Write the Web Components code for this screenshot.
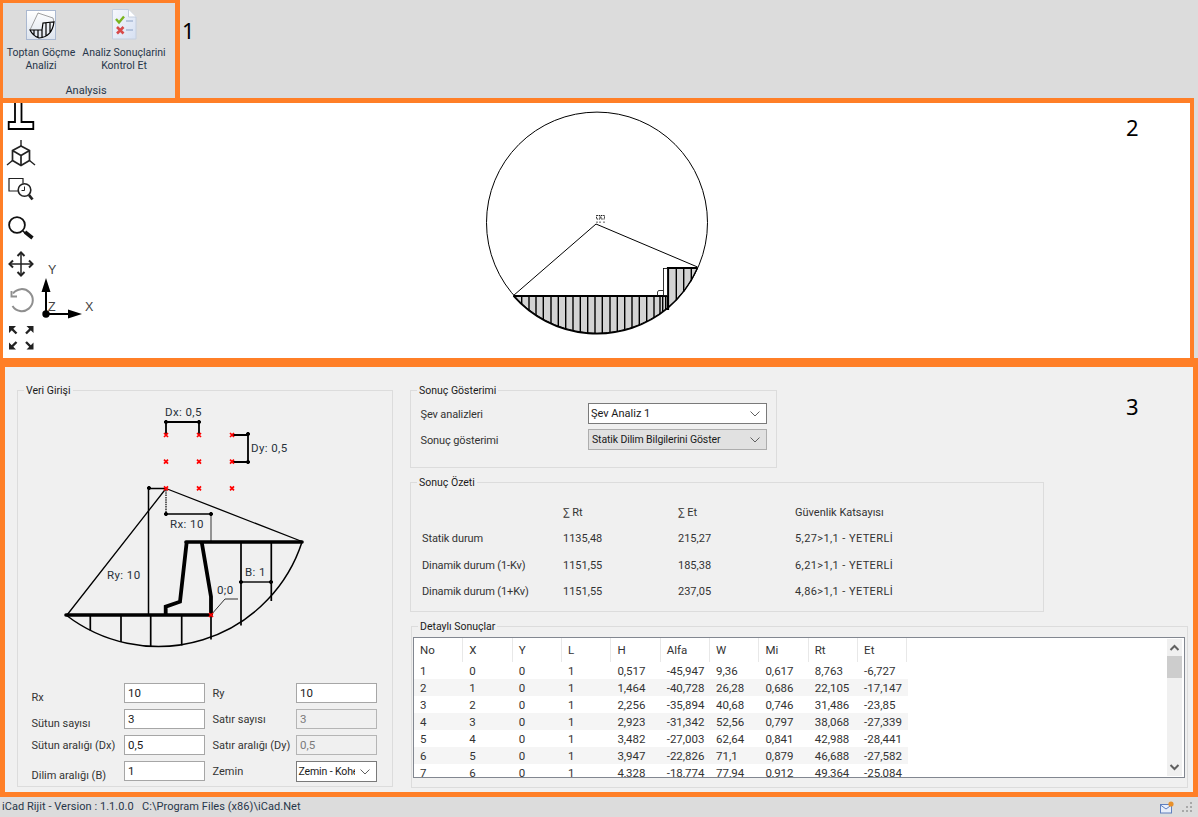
<!DOCTYPE html>
<html lang="tr">
<head>
<meta charset="utf-8">
<title>iCad Rijit</title>
<style>
html,body{margin:0;padding:0;background:#dcdcdc;}
body{width:1198px;height:817px;overflow:hidden;font:11px Roboto,"Noto Sans",sans-serif;color:#1a1a1a;}
</style>
</head>
<body>
<app-root></app-root>
<script>
const UI='Roboto,"Noto Sans",sans-serif';
const NUM='"Noto Sans","Open Sans",sans-serif';
const ORANGE='#ff7f27';
function def(name,html,init){
  customElements.define(name,class extends HTMLElement{
    constructor(){super();const r=this.attachShadow({mode:'open'});r.innerHTML=typeof html==='function'?html(this):html;if(init)init.call(this,r);}
  });
}
def('ribbon-button',`<style>
:host{display:flex;flex-direction:column;align-items:center;font:10.5px/13px ${UI};color:#27364a;text-align:center;white-space:pre;}
.i{height:36px;margin-top:7px;display:flex;align-items:flex-start;}
</style><div class="i"><slot name="icon"></slot></div><div class="t"><slot></slot></div>`);
def('ribbon-bar',`<style>
:host{display:flex;height:98px;background:#dcdcdc;flex:none;}
.g{box-sizing:border-box;width:180px;height:98px;border:solid ${ORANGE};border-width:3px 5px 0 3px;display:flex;flex-direction:column;}
.b{display:flex;flex:1;}
.l{font:11px/13px ${UI};color:#27364a;text-align:center;padding:0 0 1px 0;margin-left:-6px;}
.n{font:22px/26px ${NUM};color:#000;margin:17px 0 0 2px;}
::slotted([slot=a]){width:76px;}
::slotted([slot=b]){width:90px;}
</style><div class="g"><div class="b"><slot name="a"></slot><slot name="b"></slot></div><div class="l">Analysis</div></div><div class="n">1</div>`);
def('tool-strip',`<style>
:host{display:flex;flex-direction:column;width:38px;flex:none;}
svg{display:block;width:38px;}
</style>
<svg height="33" viewBox="3 103 38 33"><path d="M15 100V122H8.7V129H33.3V122H21.5V100" fill="#fff" stroke="#000" stroke-width="1.8"/></svg>
<svg height="36" viewBox="3 136 38 36" fill="none" stroke="#222" stroke-width="1.7">
<path d="M21 146L29.5 150.5V160.5L21 165.5L12.5 160.5V150.5Z M12.5 150.5L21 155.5L29.5 150.5 M21 155.5V165.5"/><path d="M21 140V146M12.5 160.5L7 165M29.5 160.5L35 165" stroke-width="1.4"/></svg>
<svg height="36" viewBox="3 172 38 36" fill="none" stroke="#222" stroke-width="1.2">
<path d="M18 191H9V178.5H23V183.5" /><circle cx="24.5" cy="190" r="6.3" stroke-width="1.6"/><path d="M24.5 186.5V190.5H21.5" stroke-width="1"/><path d="M29 195L32.5 199.5" stroke-width="2.8"/></svg>
<svg height="36" viewBox="3 208 38 36" fill="none" stroke="#111"><circle cx="17" cy="225" r="7.9" stroke-width="1.8"/><path d="M23 231L25 233" stroke-width="1.6"/><path d="M25 232L32.5 238" stroke-width="3.6"/></svg>
<svg height="37" viewBox="3 244 38 37" fill="none" stroke="#222" stroke-width="1.5"><path d="M21 253V275M10 264H32"/><path d="M17.5 256L21 252.5L24.5 256M17.5 272L21 275.5L24.5 272M13 260.5L9.5 264L13 267.5M29 260.5L32.5 264L29 267.5" stroke-width="2"/></svg>
<svg height="37" viewBox="3 281 38 37" fill="none" stroke="#8f8f8f" stroke-width="2"><path d="M13 293.5A11 11 0 1 1 12.5 306"/><path d="M11.5 291V296.5H17" stroke-width="1.9"/></svg>
<svg height="37" viewBox="3 318 38 37" fill="#222" stroke="#222"><path d="M9 326H16L9 333Z M33.5 326H26.5L33.5 333Z M9 349.5H16L9 342.5Z M33.5 349.5H26.5L33.5 342.5Z" stroke="none"/><path d="M11 328L16.5 333.5M31.5 328L26 333.5M11 347.5L16.5 342M31.5 347.5L26 342" stroke-width="2.4" fill="none"/></svg>`);
function stripes(){
  const xs=[155,177,198,220,243,265,287,309,331,353,375,397,420,442,464,486,508,530,552,570,578,587].map(v=>470+v/3);
  const cx=597,cy=222.6,r=111;
  let s='';
  xs.forEach(x=>{const y=cy+Math.sqrt(r*r-(x-cx)*(x-cx));s+=`M${x.toFixed(1)} 296V${y.toFixed(1)}`;});
  [668.3,676.3,683.7,691.3].forEach(x=>{const y=cy+Math.sqrt(r*r-(x-cx)*(x-cx));s+=`M${x} 268V${y.toFixed(1)}`;});
  return s;
}
def('view-port',()=>`<style>
:host{display:flex;box-sizing:border-box;width:1194px;height:260px;background:#fff;border:solid ${ORANGE};border-width:5px 4px 0 3px;flex:none;overflow:hidden;}
.a{flex:none;display:block;margin-top:155px;width:60px;height:70px;}
.c{flex:none;display:block;margin-left:379px;width:235px;height:255px;}
text{font:12.5px "Liberation Sans",sans-serif;fill:#444;}
.n{font:22px/26px ${NUM};color:#000;margin:11px 0 0 411px;}
</style>
<tool-strip></tool-strip>
<svg class="a" viewBox="41 258 60 70">
<path d="M46 314V285M46 314H72" stroke="#000" stroke-width="2"/>
<path d="M46 278L50.5 292H41.5ZM82 314L68 309.5V318.5Z" fill="#000"/><circle cx="46" cy="314" r="3.7" fill="#000"/>
<text x="48" y="274">Y</text><text x="48" y="311">Z</text><text x="85" y="311">X</text></svg>
<svg class="c" viewBox="480 103 235 255">
<path d="M513.5 296H668V268H697.5A111 111 0 0 1 513.5 296Z" fill="#d3d3d3"/>
<path d="${stripes()}" stroke="#000" stroke-width="1.4" fill="none"/>
<circle cx="597" cy="222.6" r="110.5" fill="none" stroke="#000" stroke-width="1"/>
<path d="M513.5 296A111 111 0 0 0 668 308" fill="none" stroke="#000" stroke-width="1.6"/>
<path d="M668 308A111 111 0 0 0 697.5 268" fill="none" stroke="#000" stroke-width="1.4"/>
<path d="M513.5 295.5L596 224L697.5 267" fill="none" stroke="#000" stroke-width="1"/>
<path d="M513.5 296H668M668 310V268H697.5" fill="none" stroke="#000" stroke-width="2.2"/>
<rect x="663.5" y="268.5" width="4" height="27" fill="#fff" stroke="#000" stroke-width=".8"/>
<path d="M657.5 295.5V292Q658 290 660 290.5H663" fill="#fff" stroke="#000" stroke-width=".8"/>
<g fill="none" stroke="#000" stroke-width=".9" stroke-dasharray="1.4 .8"><rect x="596.5" y="215.5" width="3.5" height="3.5"/><rect x="601" y="215.5" width="3.5" height="3.5"/><path d="M597 221.5V223.5M600 221.5V223.5M604 221.5V223.5"/></g>
</svg><div class="n">2</div>`);
def('group-box',`<style>
:host{display:block;box-sizing:border-box;position:relative;border:1px solid #dcdcdc;}
.l{position:absolute;top:-7px;left:6px;background:#f0f0f0;padding:0 2px;font:10.5px/14px ${UI};color:#1a1a1a;white-space:nowrap;}
</style><div class="l"></div><slot></slot>`,function(r){r.querySelector('.l').textContent=this.getAttribute('title')||'';this.removeAttribute('title');});
def('slope-diagram',()=>{
 const dots=[];[166,199,232].forEach(x=>[435,461.7,488.3].forEach(y=>dots.push([x,y])));dots.push([211,615]);
 const red=dots.map(([x,y])=>`<path d="M${x-2} ${y-2}L${x+2} ${y+2}M${x+2} ${y-2}L${x-2} ${y+2}" stroke="#f00" stroke-width="1.7"/>`).join('');
 const ends=[[166,422],[199,422],[248,434],[248,462],[149,488],[166,514],[211,514],[241,582],[271,582]].map(([x,y])=>`<circle cx="${x}" cy="${y}" r="1.6" fill="#000"/>`).join('');
 return `<style>:host{display:block}svg{display:block;width:374px;height:289px}text{font:11.5px ${UI};letter-spacing:.4px;fill:#27303a}</style>
<svg viewBox="18 391 374 289" fill="none" stroke="#000">
<path d="M66 615A151 151 0 0 0 302 542" stroke-width="1.5"/>
<path d="M90.3 615V630.5M121 615V642M150.7 615V646M181.7 615V645.5M211 615V639.5M241 542V625.5M271.3 542V601" stroke-width="1.7"/>
<path d="M166 488.5L67 615M166 488.5L302 541.5" stroke-width="1.3"/>
<path d="M166 488.5H148.5V615" stroke-width="1.5"/>
<path d="M166 490V514" stroke-width="1.2" stroke-dasharray="1.5 .8"/><path d="M166 514H211" stroke-width="1.4"/><path d="M211 514V542" stroke="#555" stroke-width="1.2"/>
<path d="M166 435V422H199V435" stroke-width="1.8"/><path d="M232 435H248V462H232" stroke-width="1.8"/>
<path d="M241 582H271" stroke-width="1.4"/>
<path d="M211 615L225 599H238" stroke="#333" stroke-width="1"/>
<path d="M66 615H211" stroke-width="3.6" stroke-linecap="round"/>
<path d="M186 542H302" stroke-width="3.6" stroke-linecap="round"/>
<path d="M186.7 542L180 601.7L165.7 606.7V615" stroke-width="3.8"/>
<path d="M201.7 542L211 596.7V615" stroke-width="3.8"/>
${ends}${red}
<g stroke="none"><text x="165" y="416">Dx: 0,5</text><text x="251" y="452">Dy: 0,5</text><text x="170" y="528">Rx: 10</text><text x="107" y="579">Ry: 10</text><text x="245" y="576">B: 1</text><text x="217" y="594">0;0</text></g>
</svg>`;});
def('text-field',`<style>
:host{display:block;box-sizing:border-box;height:20px;border:1px solid #a6a6a6;background:#fff;font:11.5px/18px ${UI};color:#1a1a1a;padding-left:3.5px;overflow:hidden;white-space:nowrap;}
:host([disabled]){background:#f0f0f0;border-color:#b5b5b5;color:#7a7a7a;}
</style><slot></slot>`);
def('combo-box',`<style>
:host{display:flex;box-sizing:border-box;height:21px;border:1px solid #7a7a7a;background:#fff;font:11px/19px ${UI};color:#1a1a1a;align-items:center;overflow:hidden;white-space:nowrap;}
:host([flat]){background:#e1e1e1;border-color:#adadad;}
:host([flat]),:host([tight]){font-size:10.5px;letter-spacing:-.12px;}
.t{flex:1;overflow:hidden;padding-left:2px;min-width:0;}
:host([flat]) .t{padding-left:3px;}
svg{flex:none;margin:0 6px 0 5px;display:block;}
</style><div class="t"><slot></slot></div><svg width="10" height="6" viewBox="0 0 10 6"><path d="M.5 .5L5 5L9.5 .5" fill="none" stroke="#606060"/></svg>`);
def('form-grid',`<style>
:host{display:grid;grid-template-columns:92px 81px 91px 81px;grid-auto-rows:26px;padding:3px 0 0 13.5px;font:11px/14px ${UI};color:#333;}
.l{padding-top:4px;white-space:nowrap;}
.d{padding-top:8px;}
.e2{padding-left:8px;padding-top:4px;white-space:nowrap;}
</style>
<div class="l d">Rx</div><text-field>10</text-field><div class="e2">Ry</div><text-field>10</text-field>
<div class="l d">Sütun sayısı</div><text-field>3</text-field><div class="e2">Satır sayısı</div><text-field disabled>3</text-field>
<div class="l">Sütun aralığı (Dx)</div><text-field>0,5</text-field><div class="e2">Satır aralığı (Dy)</div><text-field disabled>0,5</text-field>
<div class="l d">Dilim aralığı (B)</div><text-field>1</text-field><div class="e2">Zemin</div><combo-box tight>Zemin - Kohezyonlu</combo-box>`);
def('display-form',`<style>
:host{display:grid;grid-template-columns:167.5px 179px;grid-auto-rows:26px;padding:12px 0 0 9.5px;font:11px/21px ${UI};color:#333;}
div{padding-top:1px;letter-spacing:-.12px;}
</style><div>Şev analizleri</div><combo-box>Şev Analiz 1</combo-box><div>Sonuç gösterimi</div><combo-box flat>Statik Dilim Bilgilerini Göster</combo-box>`);
def('summary-grid',`<style>
:host{display:grid;grid-template-columns:141px 115px 117px auto;grid-auto-rows:26.4px;padding:17px 0 0 11px;font:11px/26px ${UI};color:#333;white-space:nowrap;}
.s{letter-spacing:.4px;}
.w{letter-spacing:-.12px;}
</style>
<div></div><div>∑ Rt</div><div>∑ Et</div><div>Güvenlik Katsayısı</div>
<div class="w">Statik durum</div><div>1135,48</div><div>215,27</div><div class="s">5,27&gt;1,1 - YETERLİ</div>
<div class="w">Dinamik durum (1-Kv)</div><div>1151,55</div><div>185,38</div><div class="s">6,21&gt;1,1 - YETERLİ</div>
<div class="w">Dinamik durum (1+Kv)</div><div>1151,55</div><div>237,05</div><div class="s">4,86&gt;1,1 - YETERLİ</div>`);
const HEAD=['No','X','Y','L','H','Alfa','W','Mi','Rt','Et'];
const ROWS=[
[1,0,0,1,'0,517','-45,947','9,36','0,617','8,763','-6,727'],
[2,1,0,1,'1,464','-40,728','26,28','0,686','22,105','-17,147'],
[3,2,0,1,'2,256','-35,894','40,68','0,746','31,486','-23,85'],
[4,3,0,1,'2,923','-31,342','52,56','0,797','38,068','-27,339'],
[5,4,0,1,'3,482','-27,003','62,64','0,841','42,988','-28,441'],
[6,5,0,1,'3,947','-22,826','71,1','0,879','46,688','-27,582'],
[7,6,0,1,'4,328','-18,774','77,94','0,912','49,364','-25,084']];
def('data-grid',()=>`<style>
:host{display:flex;box-sizing:border-box;margin:10px 0 0 1px;width:772px;height:141px;border:1px solid #828790;background:#fff;overflow:hidden;font:11.5px/17px ${UI};color:#333;}
.t{flex:none;width:752px;height:139px;overflow:hidden;}
.r{display:grid;grid-template-columns:repeat(10,49.35px);height:17px;width:494px;white-space:nowrap;}
.r div{padding:1px 0 0 6px;box-sizing:border-box;height:17px;}
.r:nth-child(even){background:#f5f5f5;}
.h{display:grid;grid-template-columns:repeat(10,49.35px);height:24px;width:494px;line-height:24px;}
.h div{padding-left:6px;box-sizing:border-box;border-right:1px solid #e8e8e8;}
.b{background:#fff;}
.s{flex:none;width:15px;margin:1px 2px 1px 1px;background:#f0f0f0;display:flex;flex-direction:column;align-items:center;}
.s svg{flex:none;display:block;}
.th{width:15px;height:22px;background:#cdcdcd;flex:none;}
.sp{flex:1;}
</style><div class="t"><div class="h">${HEAD.map(h=>`<div>${h}</div>`).join('')}</div><div class="b">${ROWS.map(r=>`<div class="r">${r.map(c=>`<div>${c}</div>`).join('')}</div>`).join('')}</div></div>
<div class="s"><svg width="15" height="17" viewBox="0 0 15 17"><path d="M3.5 11L7.5 7L11.5 11" fill="none" stroke="#606060" stroke-width="2"/></svg><div class="th"></div><div class="sp"></div><svg width="15" height="17" viewBox="0 0 15 17"><path d="M3.5 6L7.5 10L11.5 6" fill="none" stroke="#606060" stroke-width="2"/></svg></div>`);
def('main-panel',`<style>
:host{display:flex;box-sizing:border-box;height:439px;flex:none;width:1198px;background:#f0f0f0;border:solid ${ORANGE};border-width:9px 5px 5px 5px;padding:23px 0 0 12px;}
.left{width:376px;height:397px;flex:none;}
.right{display:flex;flex-direction:column;margin-left:17px;width:790px;flex:none;}
.a{width:367px;height:78px;flex:none;}
.b{width:634px;height:130px;margin-top:14px;flex:none;}
.c{width:777px;height:162px;margin:14px 0 0 1px;flex:none;}
.n{font:22px/26px ${NUM};color:#000;margin:3px 0 0 -74px;flex:none;}
</style>
<group-box class="left" title="Veri Girişi"><slope-diagram></slope-diagram><form-grid></form-grid></group-box>
<div class="right">
<group-box class="a" title="Sonuç Gösterimi"><display-form></display-form></group-box>
<group-box class="b" title="Sonuç Özeti"><summary-grid></summary-grid></group-box>
<group-box class="c" title="Detaylı Sonuçlar"><data-grid></data-grid></group-box>
</div><div class="n">3</div>`);
def('status-bar',`<style>
:host{display:flex;align-items:center;height:20px;flex:none;background:#dcdcdc;font:11px/20px ${UI};letter-spacing:.05px;color:#27364a;padding-left:2px;box-sizing:border-box;white-space:pre;}
.t{flex:1;}
svg{display:block;flex:none;}
</style><div class="t">iCad Rijit - Version : 1.1.0.0   C:\\Program Files (x86)\\iCad.Net</div>
<svg width="14" height="13" viewBox="0 0 14 13" style="margin-right:7px"><rect x=".5" y="3.5" width="11" height="8.5" fill="#e8eefa" stroke="#5f7fbf"/><path d="M.5 4L6 8L11.5 4" fill="none" stroke="#5f7fbf"/><circle cx="11" cy="3" r="2.6" fill="#e8902a"/></svg>
<svg width="12" height="11" viewBox="0 0 12 11" style="margin-right:5px" fill="#a8a8a8"><rect x="9" y="0" width="2" height="2"/><rect x="5" y="4" width="2" height="2"/><rect x="9" y="4" width="2" height="2"/><rect x="1" y="8" width="2" height="2"/><rect x="5" y="8" width="2" height="2"/><rect x="9" y="8" width="2" height="2"/></svg>`);
def('app-root',`<style>:host{display:flex;flex-direction:column;width:1198px;height:817px;}</style>
<ribbon-bar>
<ribbon-button slot="a"><svg slot="icon" width="30" height="30" viewBox="0 0 30 30" style="display:block">
<defs><linearGradient id="g1" x1="0" y1="0" x2="0" y2="1"><stop offset="0" stop-color="#fff"/><stop offset="1" stop-color="#dde4ee"/></linearGradient></defs>
<rect x=".5" y=".5" width="29" height="29" fill="url(#g1)" stroke="#aab8d0"/>
<path d="M12 3L4 20M12 3L27 8L28 12" fill="none" stroke="#888" stroke-width=".8"/>
<path d="M4 20H16L17 13L28 12Q26 27 13 28Q7 26 4 20ZM8 20V25M12 20V27.5M16 20V27.5M20 13V26M24 13V22" fill="none" stroke="#000" stroke-width="1.2"/></svg>Toptan Göçme
Analizi</ribbon-button>
<ribbon-button slot="b"><svg slot="icon" width="25" height="31" viewBox="0 0 25 31" style="display:block;margin-top:-1px">
<defs><linearGradient id="g2" x1="0" y1="0" x2="1" y2="1"><stop offset="0" stop-color="#f6f8fd"/><stop offset="1" stop-color="#d6e0f2"/></linearGradient></defs>
<path d="M.5 .5H16.5L24 8V30H.5Z" fill="url(#g2)" stroke="#c4cede"/><path d="M16.5 .5V8H24" fill="#fff" stroke="#c4cede"/>
<path d="M4 10L7 13.5L12 7.5" fill="none" stroke="#7ab41e" stroke-width="2.4"/><path d="M5 18L11.5 24.5M11.5 18L5 24.5" stroke="#d84a4a" stroke-width="2.6"/>
<path d="M14 12H21M14 21H21" stroke="#8aa0c4"/></svg>Analiz Sonuçlarini
Kontrol Et</ribbon-button>
</ribbon-bar>
<view-port></view-port>
<main-panel></main-panel>
<status-bar></status-bar>`);
</script>
</body>
</html>
